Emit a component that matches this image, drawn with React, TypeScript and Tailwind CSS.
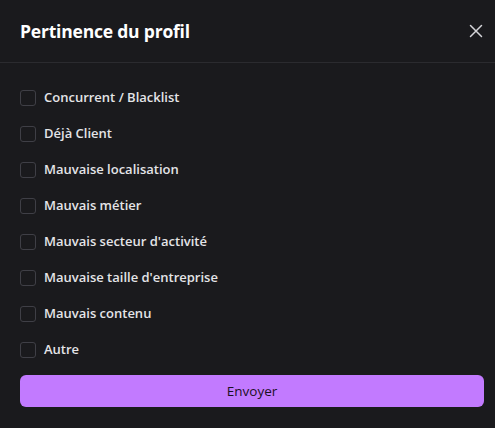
import React from 'react';

const options = [
  'Concurrent / Blacklist',
  'Déjà Client',
  'Mauvaise localisation',
  'Mauvais métier',
  "Mauvais secteur d'activité",
  "Mauvaise taille d'entreprise",
  'Mauvais contenu',
  'Autre',
];

export default function App() {
  return (
    <div className="w-[495px] h-[428px] bg-[#1a1a1d] text-white font-['Open_Sans',sans-serif]">
      {/* En-tête */}
      <div className="h-[63px] flex items-center justify-between pl-5 pr-[7px] border-b border-[#2b2b2f]">
        <h2 className="text-[17.5px] font-bold text-white tracking-[-0.2px]">Pertinence du profil</h2>
        <button className="w-6 h-6 flex items-center justify-center text-[#d4d4d8]">
          <svg width="14" height="14" viewBox="0 0 14 14" fill="none" stroke="currentColor" strokeWidth={1.5} strokeLinecap="round">
            <path d="M1.5 1.5l11 11M12.5 1.5l-11 11" />
          </svg>
        </button>
      </div>

      {/* Liste des motifs */}
      <div className="pl-5 pr-[11px] pt-[25px]">
        <div className="flex flex-col gap-4">
          {options.map((opt) => (
            <label key={opt} className="h-5 flex items-center gap-2 cursor-pointer">
              <span className="w-4 h-4 rounded-[3px] border border-[#3f3f46] bg-transparent" />
              <span className="text-[13px] font-semibold text-[#e4e4e7]">{opt}</span>
            </label>
          ))}
        </div>
        <button className="mt-[15px] h-8 w-full rounded-md bg-[#c27aff] text-[#1c1024] text-[13.5px] font-medium">
          Envoyer
        </button>
      </div>
    </div>
  );
}
